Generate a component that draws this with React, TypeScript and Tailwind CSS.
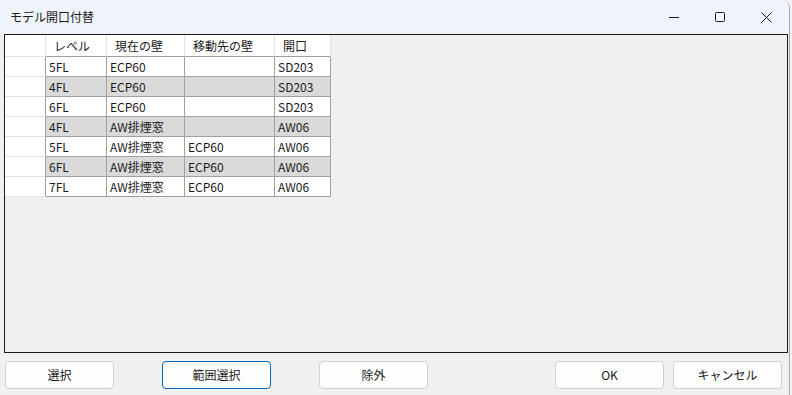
import React from 'react';

const rows = [
  ['5FL', 'ECP60', '', 'SD203'],
  ['4FL', 'ECP60', '', 'SD203'],
  ['6FL', 'ECP60', '', 'SD203'],
  ['4FL', 'AW排煙窓', '', 'AW06'],
  ['5FL', 'AW排煙窓', 'ECP60', 'AW06'],
  ['6FL', 'AW排煙窓', 'ECP60', 'AW06'],
  ['7FL', 'AW排煙窓', 'ECP60', 'AW06'],
];

const widths = ['w-[61px]', 'w-[78px]', 'w-[90px]', 'w-[56px]'];
const headers = ['レベル', '現在の壁', '移動先の壁', '開口'];

const Btn = ({ label, focused }: { label: string; focused?: boolean }) => (
  <button
    className={`h-[28px] w-[109px] rounded-[4px] bg-[#fdfdfd] text-[12px] text-[#1a1a1a] ${
      focused ? 'border border-[#0067c0]' : 'border border-[#d0d0d0]'
    }`}
  >
    {label}
  </button>
);

const App = () => {
  return (
    <div
      className="w-[792px] h-[395px] bg-[#f3f3f3] overflow-hidden"
      style={{ fontFamily: '"Noto Sans CJK JP", "Noto Sans", sans-serif' }}
    >
      <div className="w-[790px] h-[395px] bg-[#f0f0f0] border-r border-[#a8a8a8] rounded-tr-[8px] flex flex-col overflow-hidden">
        {/* title bar */}
        <div className="h-[34px] bg-[#eef4f9] flex items-center shrink-0">
          <span className="pl-[10px] text-[12px] text-[#1a1a1a]">モデル開口付替</span>
          <div className="ml-auto flex items-center h-full">
            <div className="w-[46px] h-full flex items-center justify-center">
              <svg width="10" height="10" viewBox="0 0 10 10">
                <path d="M0 5.5h10" stroke="#1a1a1a" strokeWidth="1" />
              </svg>
            </div>
            <div className="w-[46px] h-full flex items-center justify-center">
              <svg width="10" height="10" viewBox="0 0 10 10">
                <rect x="0.5" y="0.5" width="9" height="9" rx="1" fill="none" stroke="#1a1a1a" strokeWidth="1" />
              </svg>
            </div>
            <div className="w-[46px] h-full flex items-center justify-center">
              <svg width="11" height="11" viewBox="0 0 11 11">
                <path d="M0.5 0.5l10 10M10.5 0.5l-10 10" stroke="#1a1a1a" strokeWidth="1" />
              </svg>
            </div>
          </div>
        </div>

        {/* grid */}
        <div className="ml-[4px] w-[784px] h-[319px] border border-[#1a1a1a] bg-[#f0f0f0] shrink-0 text-[12px] text-[#1a1a1a]">
          <div className="flex h-[22px]">
            <div className="w-[41px] bg-white border-r border-[#e3e3e3] border-b border-b-[#e3e3e3]" />
            {headers.map((h, i) => (
              <div
                key={h}
                className={`${widths[i]} bg-white border-r border-[#e3e3e3] border-b border-b-[#a0a0a0] pl-[8px] flex items-center`}
              >
                {h}
              </div>
            ))}
          </div>
          {rows.map((r, ri) => (
            <div key={ri} className="flex h-[20px]">
              <div className="w-[41px] bg-white border-r border-[#a0a0a0] border-b border-b-[#e3e3e3]" />
              {r.map((c, ci) => (
                <div
                  key={ci}
                  className={`${widths[ci]} ${
                    ri % 2 === 1 ? 'bg-[#dadada]' : 'bg-white'
                  } border-r border-b border-[#a0a0a0] pl-[3px] flex items-center leading-none`}
                >
                  {c}
                </div>
              ))}
            </div>
          ))}
        </div>

        {/* buttons */}
        <div className="flex items-center mt-[8px] pl-[5px]">
          <Btn label="選択" />
          <div className="w-[48px]" />
          <Btn label="範囲選択" focused />
          <div className="w-[48px]" />
          <Btn label="除外" />
          <div className="w-[127px]" />
          <Btn label="OK" />
          <div className="w-[9px]" />
          <Btn label="キャンセル" />
        </div>
      </div>
    </div>
  );
};

export default App;
